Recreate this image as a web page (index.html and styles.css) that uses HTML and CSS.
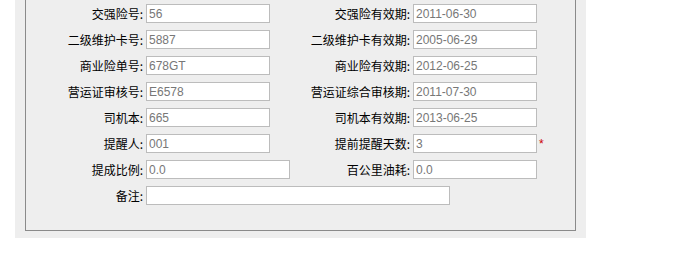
FILE: index.html
```html
<!DOCTYPE html>
<html lang="zh-CN">
<head>
    <meta charset="UTF-8">
    <title>车辆信息</title>
    <link rel="stylesheet" href="styles.css">
</head>
<body>

    <div class="panel">
        <div class="box">
            <div class="form">
                <label class="lbl">交强险号:</label>
                <div class="fld"><input type="text" value="56"></div>
                <label class="lbl">交强险有效期:</label>
                <div class="fld"><input type="text" value="2011-06-30"></div>

                <label class="lbl">二级维护卡号:</label>
                <div class="fld"><input type="text" value="5887"></div>
                <label class="lbl">二级维护卡有效期:</label>
                <div class="fld"><input type="text" value="2005-06-29"></div>

                <label class="lbl">商业险单号:</label>
                <div class="fld"><input type="text" value="678GT"></div>
                <label class="lbl">商业险有效期:</label>
                <div class="fld"><input type="text" value="2012-06-25"></div>

                <label class="lbl">营运证审核号:</label>
                <div class="fld"><input type="text" value="E6578"></div>
                <label class="lbl">营运证综合审核期:</label>
                <div class="fld"><input type="text" value="2011-07-30"></div>

                <label class="lbl">司机本:</label>
                <div class="fld"><input type="text" value="665"></div>
                <label class="lbl">司机本有效期:</label>
                <div class="fld"><input type="text" value="2013-06-25"></div>

                <label class="lbl">提醒人:</label>
                <div class="fld"><input type="text" value="001"></div>
                <label class="lbl">提前提醒天数:</label>
                <div class="fld"><input type="text" value="3"><span class="req">*</span></div>

                <label class="lbl">提成比例:</label>
                <div class="fld"><input type="text" class="mid" value="0.0"></div>
                <label class="lbl">百公里油耗:</label>
                <div class="fld"><input type="text" value="0.0"></div>

                <label class="lbl">备注:</label>
                <div class="fld wide"><input type="text" class="long" value=""></div>
            </div>
        </div>
    </div>

</body>
</html>
```

FILE: styles.css
```css
body {
    margin: 0;
    background-color: #fff;
    font-family: "Liberation Sans", Arial, "Noto Sans CJK SC", sans-serif;
    font-size: 12px;
}

.panel {
    width: 551px;
    margin-left: 15px;
    padding: 0 10px 7px;
    background-color: #eeeeee;
}

.box {
    border: 1px solid #8a8a8a;
    border-top: none;
    padding: 4px 0 25px;
}

.form {
    display: grid;
    grid-template-columns: 120px 150px 117px auto;
    row-gap: 7px;
    align-items: center;
}

.lbl {
    text-align: right;
    padding-right: 3px;
    font-family: "Noto Sans CJK SC", sans-serif;
    color: #000;
    line-height: 19px;
    white-space: nowrap;
}

.fld {
    display: flex;
    align-items: center;
}

.fld.wide {
    grid-column: 2 / 5;
}

input {
    box-sizing: border-box;
    width: 124px;
    height: 19px;
    margin: 0;
    padding: 0 2px;
    border: 1px solid #bcbcbc;
    background-color: #fff;
    color: #777;
    font-family: "Liberation Sans", Arial, sans-serif;
    font-size: 12px;
}

input.mid {
    width: 144px;
}

input.long {
    width: 304px;
}

.req {
    color: #cc0000;
    margin-left: 2px;
    font-size: 12px;
    line-height: 12px;
}
```
